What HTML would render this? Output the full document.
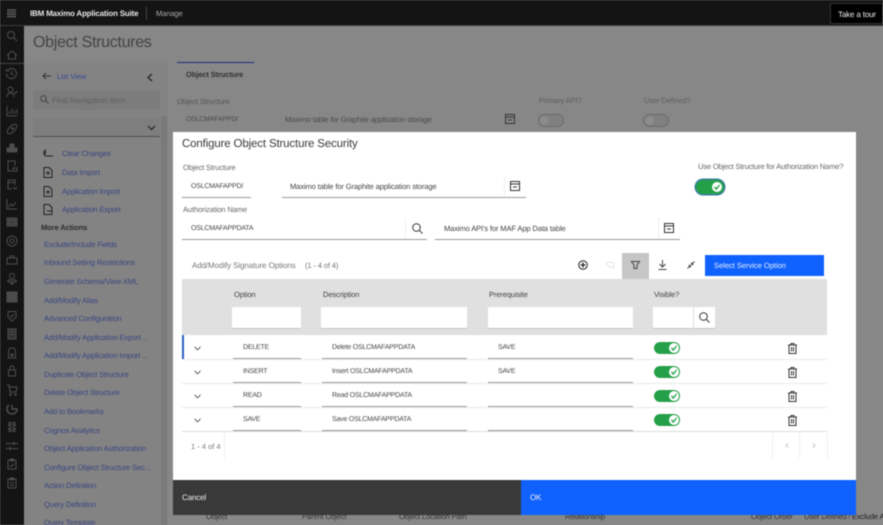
<!DOCTYPE html>
<html lang="en">
<head>
<meta charset="utf-8">
<title>Object Structures</title>
<style>
html,body{margin:0;padding:0;width:883px;height:525px;overflow:hidden;background:#878787}
body{position:relative;font-family:"Liberation Sans",sans-serif;font-size:7.6px;letter-spacing:-.15px;color:#333;filter:blur(.4px);text-rendering:geometricPrecision}
.b{position:absolute}
.t{position:absolute;line-height:12px;height:12px;white-space:nowrap;margin-top:1.7px}
svg{position:absolute;overflow:visible;fill:none}
.nav{color:#3a4580;left:44px}
.bgl{color:#4a4a4a}
.mut{color:#666}
.val{color:#444}
.up{font-size:7px;letter-spacing:-.2px}
.th{color:#444;font-weight:normal}
.u{position:absolute;height:1px;background:#9a9a9a}
.rail svg{stroke:#4e4e4e;stroke-width:1}
.tg{position:absolute;width:26px;height:12px;border-radius:6px;background:#24a148}
.tg i{position:absolute;right:1px;top:1px;width:10px;height:10px;border-radius:50%;background:#fff}
.tg svg{left:2px;top:2px;stroke:#24a148;stroke-width:1.4}
.off{position:absolute;width:24px;height:11px;border:1px solid #6b6b6b;border-radius:7px;background:#808080}
.off i{position:absolute;left:1px;top:1px;width:9px;height:9px;border-radius:50%;background:#8c8c8c}
.ins{position:absolute;background:#fff;height:21px;border-bottom:1px solid #c6c6c6}
</style>
</head>
<body>
<!-- header -->
<div class="b" style="left:0;top:0;width:883px;height:26px;background:#141414;border-bottom:1px solid #3a3a3a;box-sizing:border-box"></div>
<svg style="left:7px;top:9px" width="9" height="9"><path d="M0 1H9M0 3.2H9M0 5.4H9M0 7.6H9" stroke="#666" stroke-width="1.2"/></svg>
<div class="t" style="left:30px;top:6px;color:#e4e4e4;font-size:8px;font-weight:bold;letter-spacing:-.2px">IBM Maximo Application Suite</div>
<div class="b" style="left:146px;top:7px;width:1px;height:13px;background:#444"></div>
<div class="t" style="left:156px;top:6px;color:#a8a8a8">Manage</div>
<div class="b" style="left:830px;top:3px;width:53px;height:21px;background:#000;border:1px solid #333;box-sizing:border-box"></div>
<div class="t" style="left:838px;top:7px;color:#f0f0f0;font-size:8px">Take a tour</div>

<!-- rail -->
<div class="b" style="left:0;top:26px;width:24px;height:499px;background:#141414"></div>
<div class="b" style="left:0;top:63px;width:24px;height:1px;background:#444"></div>
<div class="rail">
<svg style="left:6px;top:30px" width="12" height="12"><circle cx="5" cy="5" r="3.5"/><path d="M7.5 7.5L11 11"/></svg>
<svg style="left:6px;top:49px" width="12" height="12"><path d="M1 6L6 2L11 6M2.5 5V10H9.5V5"/></svg>
<svg style="left:5px;top:67px" width="13" height="13"><path d="M3 3A5 5 0 1 1 1.5 6.5M1.5 1.5V4H4M6.5 4V7L8.5 8"/></svg>
<svg style="left:6px;top:86px" width="12" height="12"><circle cx="4.5" cy="3.5" r="2.5"/><path d="M1 11C1 8 2.500 7 4.500 7S8 8 8 11M8 6L9.500 7.500L11.500 5"/></svg>
<svg style="left:6px;top:105px" width="12" height="12"><path d="M1 1V11H11M3.500 9V6M6 9V3.500M8.500 9V5M11 9V4"/></svg>
<svg style="left:6px;top:123px" width="12" height="12"><ellipse cx="6" cy="6" rx="6" ry="3" transform="rotate(-45 6 6)"/><circle cx="6.500" cy="5.500" r="1"/></svg>
<svg style="left:6px;top:142px" width="12" height="12"><path d="M4 2H8V5H4ZM1 6H11V9H1ZM1 10H11" fill="#4e4e4e"/></svg>
<svg style="left:6px;top:160px" width="12" height="12"><path d="M9 6V1H2V11H6M7 8H11V11H7Z"/></svg>
<svg style="left:6px;top:179px" width="12" height="12"><path d="M9 6V1H2V10H6M2 3.500H9M7 8L9 10L11 8"/></svg>
<svg style="left:6px;top:198px" width="12" height="12"><path d="M1 1V11H11M2.500 9L5 6L7 8L10 4"/></svg>
<svg style="left:6px;top:216px" width="12" height="12"><path d="M1 2H11V10H1ZM3 4H9V8H3Z" fill="#3a3a3a"/></svg>
<svg style="left:6px;top:235px" width="12" height="12"><circle cx="6" cy="6" r="5"/><circle cx="6" cy="6" r="2"/></svg>
<svg style="left:6px;top:254px" width="12" height="12"><path d="M1 4H11V10H1ZM4 4V2H8V4"/></svg>
<svg style="left:6px;top:273px" width="12" height="12"><circle cx="6" cy="3" r="2.500"/><path d="M2 7H10V9H2ZM5 9V11H7V9"/></svg>
<svg style="left:6px;top:291px" width="12" height="12"><path d="M1 1H11V11H1ZM1 4.500H11M6 7H11" fill="#4a4a4a"/></svg>
<svg style="left:6px;top:310px" width="12" height="12"><path d="M2 1.500H10V7L6 11L2 7ZM4 5.500L5.500 7L8 4"/></svg>
<svg style="left:6px;top:328px" width="12" height="12"><path d="M2 1H10V11H2ZM4 4H8M4 6.500H8" fill="#333"/></svg>
<svg style="left:6px;top:347px" width="12" height="12"><path d="M2.500 4L4 1H8L9.500 4V11H2.500ZM5 7H7V9H5Z"/></svg>
<svg style="left:6px;top:365px" width="12" height="12"><path d="M2.500 5H9.500V11H2.500ZM4 5V3A2 2 0 0 1 8 3V5"/></svg>
<svg style="left:6px;top:384px" width="12" height="12"><path d="M1 1H3L4 8H10L11 3H3.500"/><circle cx="4.500" cy="10.500" r=".8"/><circle cx="9.500" cy="10.500" r=".8"/></svg>
<svg style="left:6px;top:403px" width="12" height="12"><path d="M3 2A5 5 0 1 0 11 6H6V2" stroke-width="1.500"/></svg>
<svg style="left:6px;top:421px" width="12" height="12"><path d="M3 1.500H5V4H3ZM7 1.500H9V4H7ZM3 8H5V10.500H3ZM7 8H9V10.500H7ZM2 4L5 6L2 8M10 4L7 6L10 8"/></svg>
<svg style="left:6px;top:440px" width="12" height="12"><path d="M0 3.500H12M0 8.500H12M8 1.500V5.500M4 6.500V10.500"/></svg>
<svg style="left:6px;top:458px" width="12" height="12"><path d="M2 2H10V11H2ZM4.500 1H7.500V3H4.500ZM4 7L5.500 8.500L8 5.500"/></svg>
<svg style="left:6px;top:477px" width="12" height="12"><path d="M2 2H10V11H2ZM4.500 1H7.500V3H4.500ZM4 6H8M4 8.500H8"/></svg>
</div>

<!-- page behind -->
<div class="t" style="left:33px;top:29px;height:24px;line-height:24px;font-size:16px;letter-spacing:-.3px;color:#444">Object Structures</div>
<div class="b" style="left:24px;top:63px;width:144px;height:462px;background:#838383"></div>
<div class="b" style="left:161px;top:116px;width:6px;height:409px;background:#7a7a7a"></div>
<svg style="left:42px;top:72px" width="9" height="8"><path d="M9 4H1M4 1L1 4L4 7" stroke="#333"/></svg>
<div class="t" style="left:57px;top:69px;color:#3a4a90">List View</div>
<svg style="left:147px;top:73px" width="6" height="9"><path d="M5 1L1 4.500L5 8" stroke="#222" stroke-width="1.200"/></svg>
<div class="b" style="left:33px;top:90px;width:127px;height:20px;background:#7c7c7c"></div>
<svg style="left:40px;top:95px" width="9" height="9"><circle cx="3.500" cy="3.500" r="2.800" stroke="#444"/><path d="M5.500 5.500L8.500 8.500" stroke="#444"/></svg>
<div class="t" style="left:52px;top:93px;color:#5e5e5e;font-size:8px;letter-spacing:0">Find Navigation Item</div>
<div class="b" style="left:33px;top:118px;width:127px;height:19px;background:#7e7e7e;border-bottom:1px solid #4f4f4f;box-sizing:border-box"></div>
<svg style="left:147px;top:125px" width="9" height="6"><path d="M1 1L4.500 4.500L8 1" stroke="#222" stroke-width="1.200"/></svg>

<svg style="left:43px;top:149px" width="11" height="9"><path d="M10 7H3A2 2 0 0 1 3 3H1M0.500 3L3 .5M0.500 3L3 5.500" stroke="#222"/></svg>
<div class="t nav" style="left:62px;top:146px">Clear Changes</div>
<svg style="left:43px;top:167px" width="10" height="11"><path d="M1 .5H6L9 3.500V10.500H1ZM3 6H7M5 4V8" stroke="#222"/></svg>
<div class="t nav" style="left:62px;top:165px">Data Import</div>
<svg style="left:43px;top:186px" width="10" height="11"><path d="M1 .5H6L9 3.500V10.500H1ZM3 6H7M5 4V8" stroke="#222"/></svg>
<div class="t nav" style="left:62px;top:184px">Application Import</div>
<svg style="left:43px;top:204px" width="10" height="11"><path d="M1 .5H6L9 3.500V10.500H1ZM4 7H9" stroke="#222"/></svg>
<div class="t nav" style="left:62px;top:202px">Application Export</div>
<div class="t" style="left:41px;top:220px;font-weight:bold;color:#2c2c2c">More Actions</div>
<div class="t nav" style="top:237px">Exclude/Include Fields</div>
<div class="t nav" style="top:255px">Inbound Setting Restrictions</div>
<div class="t nav" style="top:274px">Generate Schema/View XML</div>
<div class="t nav" style="top:293px">Add/Modify Alias</div>
<div class="t nav" style="top:311px">Advanced Configuration</div>
<div class="t nav" style="top:330px">Add/Modify Application Export ...</div>
<div class="t nav" style="top:348px">Add/Modify Application Import ...</div>
<div class="t nav" style="top:367px">Duplicate Object Structure</div>
<div class="t nav" style="top:385px">Delete Object Structure</div>
<div class="t nav" style="top:404px">Add to Bookmarks</div>
<div class="t nav" style="top:423px">Cognos Analytics</div>
<div class="t nav" style="top:441px">Object Application Authorization</div>
<div class="t nav" style="top:460px">Configure Object Structure Sec...</div>
<div class="t nav" style="top:478px">Action Definition</div>
<div class="t nav" style="top:497px">Query Definition</div>
<div class="t nav" style="top:515px">Query Template</div>

<div class="b" style="left:177px;top:62px;width:77px;height:1px;background:#1c2f80"></div>
<div class="t" style="left:186px;top:67px;font-weight:bold;color:#333">Object Structure</div>
<div class="t bgl" style="left:177px;top:94px;color:#555">Object Structure</div>
<div class="t bgl up" style="left:186px;top:112px">OSLCMAFAPPD/</div>
<div class="t bgl" style="left:285px;top:112px">Maximo table for Graphite application storage</div>
<svg style="left:505px;top:114px" width="10" height="10"><path d="M.5 .5H9.500V9.500H.5ZM.5 3H9.500M3 6H7" stroke="#333"/></svg>
<div class="t" style="left:539px;top:93px;color:#5f5f5f">Primary API?</div>
<div class="t" style="left:644px;top:93px;color:#5f5f5f">User Defined?</div>
<div class="off" style="left:538px;top:114px"><i></i></div>
<div class="off" style="left:643px;top:114px"><i></i></div>
<div class="t" style="left:206px;top:509px;color:#333">Object</div>
<div class="t" style="left:302px;top:509px;color:#333">Parent Object</div>
<div class="t" style="left:399px;top:509px;color:#333">Object Location Path</div>
<div class="t" style="left:565px;top:509px;color:#333">Relationship</div>
<div class="t" style="left:751px;top:509px;color:#333">Object Order</div>
<div class="t" style="left:804px;top:509px;color:#333">User Defined?</div>
<div class="t" style="left:852px;top:509px;color:#222">Exclude A</div>

<!-- modal -->
<div class="b" style="left:173px;top:132px;width:683px;height:348px;background:#fff"></div>
<div class="t" style="left:182px;top:135px;height:15px;line-height:15px;font-size:11.500px;letter-spacing:-.15px;color:#3a3a3a">Configure Object Structure Security</div>
<div class="t mut" style="left:183px;top:160px">Object Structure</div>
<div class="t val up" style="left:191px;top:179px">OSLCMAFAPPD/</div>
<div class="u" style="left:182px;top:197px;width:69px"></div>
<div class="t val" style="left:290px;top:179px">Maximo table for Graphite application storage</div>
<div class="u" style="left:282px;top:197px;width:244px"></div>
<div class="b" style="left:504px;top:177px;width:1px;height:20px;background:#eee"></div>
<svg style="left:510px;top:181px" width="10" height="10"><path d="M.5 .5H9.500V9.500H.5ZM.5 3H9.500M3 6H7" stroke="#333"/></svg>
<div class="t mut" style="left:183px;top:202px">Authorization Name</div>
<div class="t val up" style="left:191px;top:221px">OSLCMAFAPPDATA</div>
<div class="u" style="left:182px;top:239px;width:245px"></div>
<div class="b" style="left:405px;top:218px;width:1px;height:21px;background:#eee"></div>
<svg style="left:412px;top:223px" width="11" height="11"><circle cx="4.500" cy="4.500" r="3.800" stroke="#333"/><path d="M7.300 7.300L10.500 10.500" stroke="#333"/></svg>
<div class="t val" style="left:444px;top:221px">Maximo API's for MAF App Data table</div>
<div class="u" style="left:435px;top:239px;width:245px"></div>
<div class="b" style="left:658px;top:218px;width:1px;height:21px;background:#eee"></div>
<svg style="left:664px;top:223px" width="10" height="10"><path d="M.5 .5H9.500V9.500H.5ZM.5 3H9.500M3 6H7" stroke="#333"/></svg>
<div class="t mut" style="left:698px;top:159px;letter-spacing:-.2px">Use Object Structure for Authorization Name?</div>
<div class="b" style="left:696px;top:180px;width:28px;height:14px;border-radius:8px;background:#24a148;box-shadow:0 0 0 1.500px #3a7f9e"></div>
<div class="b" style="left:712px;top:182px;width:10px;height:10px;border-radius:50%;background:#fff"></div>
<svg style="left:714px;top:184px" width="6" height="6"><path d="M.5 3L2.300 5L5.500 1" stroke="#24a148" stroke-width="1.400"/></svg>

<!-- toolbar -->
<div class="t" style="left:192px;top:258px;color:#777;font-size:8px;letter-spacing:-.1px">Add/Modify Signature Options</div>
<div class="t" style="left:305px;top:258px;color:#777">(1 - 4 of 4)</div>
<svg style="left:578px;top:260px" width="10" height="10"><circle cx="5" cy="5" r="4.300" stroke="#222"/><path d="M2.500 5H7.500M5 2.500V7.500" stroke="#222" stroke-width="1.300"/></svg>
<svg style="left:605px;top:261px" width="10" height="8"><path d="M1 3L3 1L9 2V7L5 6Z" stroke="#e4e4e4"/></svg>
<div class="b" style="left:622px;top:253px;width:27px;height:26px;background:#c6c6c6"></div>
<svg style="left:631px;top:261px" width="9" height="9"><path d="M.5 .5H8.500L6 4V7.500H3V4Z" stroke="#444"/></svg>
<svg style="left:658px;top:260px" width="9" height="10"><path d="M4.500 0V6.500M1.500 4L4.500 7L7.500 4M.5 9.500H8.500" stroke="#444"/></svg>
<svg style="left:687px;top:261px" width="8" height="8"><path d="M7.500 .5L5 3M.5 7.500L3 5" stroke="#444"/><path d="M4.500 1.500V3.500H6.500M1.500 4.500H3.500V6.500" stroke="#444"/></svg>
<div class="b" style="left:705px;top:255px;width:119px;height:21px;background:#0f62fe"></div>
<div class="t" style="left:714px;top:258.500px;color:#e6eeff;letter-spacing:-.05px">Select Service Option</div>
<div class="b" style="left:182px;top:279px;width:645px;height:1px;background:#e0e0e0"></div>

<!-- table -->
<div class="b" style="left:182px;top:279px;width:645px;height:56px;background:#e0e0e0"></div>
<div class="t th" style="left:234px;top:287px">Option</div>
<div class="t th" style="left:323px;top:287px">Description</div>
<div class="t th" style="left:489px;top:287px">Prerequisite</div>
<div class="t th" style="left:654px;top:287px">Visible?</div>
<div class="ins" style="left:232px;top:307px;width:69px"></div>
<div class="ins" style="left:321px;top:307px;width:146px"></div>
<div class="ins" style="left:488px;top:307px;width:145px"></div>
<div class="ins" style="left:653px;top:307px;width:40px"></div>
<div class="ins" style="left:694px;top:307px;width:21px"></div>
<svg style="left:699px;top:312px" width="11" height="11"><circle cx="4.500" cy="4.500" r="3.800" stroke="#333"/><path d="M7.300 7.300L10.500 10.500" stroke="#333"/></svg>

<div class="b" style="left:182px;top:335px;width:2px;height:24px;background:#2f5fc4"></div>
<div class="b" style="left:182px;top:359px;width:645px;height:1px;background:#eaeaea"></div>
<div class="b" style="left:182px;top:383px;width:645px;height:1px;background:#eaeaea"></div>
<div class="b" style="left:182px;top:407px;width:645px;height:1px;background:#eaeaea"></div>
<div class="b" style="left:182px;top:431px;width:645px;height:1px;background:#dcdcdc"></div>

<svg style="left:194px;top:346px" width="7" height="5"><path d="M.5 .8L3.500 3.800L6.500 .8" stroke="#555"/></svg>
<svg style="left:194px;top:370px" width="7" height="5"><path d="M.5 .8L3.500 3.800L6.500 .8" stroke="#555"/></svg>
<svg style="left:194px;top:394px" width="7" height="5"><path d="M.5 .8L3.500 3.800L6.500 .8" stroke="#555"/></svg>
<svg style="left:194px;top:418px" width="7" height="5"><path d="M.5 .8L3.500 3.800L6.500 .8" stroke="#555"/></svg>

<div class="t val up" style="left:243px;top:340px">DELETE</div>
<div class="t val up" style="left:243px;top:364px">INSERT</div>
<div class="t val up" style="left:243px;top:388.500px">READ</div>
<div class="t val up" style="left:243px;top:412.500px">SAVE</div>
<div class="t val up" style="left:332px;top:340px">Delete OSLCMAFAPPDATA</div>
<div class="t val up" style="left:332px;top:364px">Insert OSLCMAFAPPDATA</div>
<div class="t val up" style="left:332px;top:388.500px">Read OSLCMAFAPPDATA</div>
<div class="t val up" style="left:332px;top:412.500px">Save OSLCMAFAPPDATA</div>
<div class="t val up" style="left:498px;top:340px">SAVE</div>
<div class="t val up" style="left:498px;top:364px">SAVE</div>

<div class="u" style="left:233px;top:358px;width:68px"></div>
<div class="u" style="left:233px;top:382px;width:68px"></div>
<div class="u" style="left:233px;top:406px;width:68px"></div>
<div class="u" style="left:233px;top:430px;width:68px"></div>
<div class="u" style="left:322px;top:358px;width:145px"></div>
<div class="u" style="left:322px;top:382px;width:145px"></div>
<div class="u" style="left:322px;top:406px;width:145px"></div>
<div class="u" style="left:322px;top:430px;width:145px"></div>
<div class="u" style="left:488px;top:358px;width:145px"></div>
<div class="u" style="left:488px;top:382px;width:145px"></div>
<div class="u" style="left:488px;top:406px;width:145px"></div>
<div class="u" style="left:488px;top:430px;width:145px"></div>

<div class="tg" style="left:654px;top:342px"><i><svg width="6" height="6"><path d="M.5 3L2.300 5L5.500 1"/></svg></i></div>
<div class="tg" style="left:654px;top:366px"><i><svg width="6" height="6"><path d="M.5 3L2.300 5L5.500 1"/></svg></i></div>
<div class="tg" style="left:654px;top:390px"><i><svg width="6" height="6"><path d="M.5 3L2.300 5L5.500 1"/></svg></i></div>
<div class="tg" style="left:654px;top:414px"><i><svg width="6" height="6"><path d="M.5 3L2.300 5L5.500 1"/></svg></i></div>

<svg style="left:788px;top:343px" width="9" height="11"><path d="M0 2H9M3 2V.5H6V2M1 2V10.500H8V2M3.500 4V8.500M5.500 4V8.500" stroke="#333"/></svg>
<svg style="left:788px;top:367px" width="9" height="11"><path d="M0 2H9M3 2V.5H6V2M1 2V10.500H8V2M3.500 4V8.500M5.500 4V8.500" stroke="#333"/></svg>
<svg style="left:788px;top:391px" width="9" height="11"><path d="M0 2H9M3 2V.5H6V2M1 2V10.500H8V2M3.500 4V8.500M5.500 4V8.500" stroke="#333"/></svg>
<svg style="left:788px;top:415px" width="9" height="11"><path d="M0 2H9M3 2V.5H6V2M1 2V10.500H8V2M3.500 4V8.500M5.500 4V8.500" stroke="#333"/></svg>

<!-- pagination -->
<div class="t" style="left:191px;top:439px;color:#777;font-size:7.500px;letter-spacing:0">1 - 4 of 4</div>
<div class="b" style="left:224px;top:432px;width:1px;height:26px;background:#eee"></div>
<div class="b" style="left:772px;top:432px;width:1px;height:26px;background:#f0f0f0"></div>
<div class="b" style="left:799px;top:432px;width:1px;height:26px;background:#f0f0f0"></div>
<div class="b" style="left:827px;top:432px;width:1px;height:26px;background:#f0f0f0"></div>
<svg style="left:785px;top:443px" width="4" height="5"><path d="M3 .5L1 2.500L3 4.500" stroke="#c6c6c6"/></svg>
<svg style="left:812px;top:443px" width="4" height="5"><path d="M1 .5L3 2.500L1 4.500" stroke="#c6c6c6"/></svg>

<!-- footer -->
<div class="b" style="left:173px;top:480px;width:348px;height:34.500px;background:#393939"></div>
<div class="b" style="left:521px;top:480px;width:335px;height:34.500px;background:#0f62fe"></div>
<div class="t" style="left:182px;top:490px;color:#f0f0f0;font-size:8px">Cancel</div>
<div class="t" style="left:530px;top:490px;color:#f0f0f0;font-size:8px">OK</div>
</body>
</html>
